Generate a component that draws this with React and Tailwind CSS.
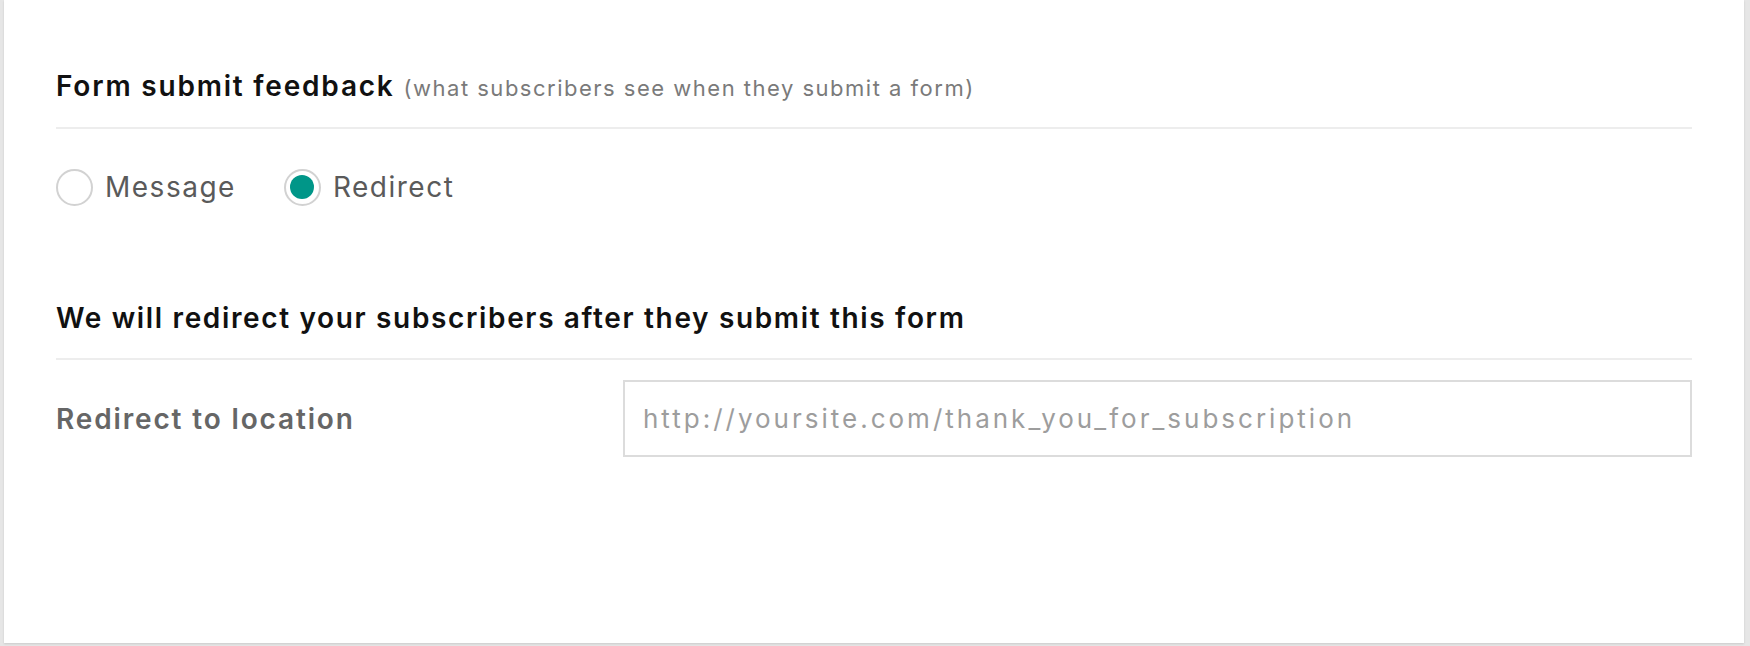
import { useState } from "react";

function Radio({ checked, label, onClick }) {
  return (
    <button type="button" onClick={onClick} className="flex items-center gap-[12px]">
      <span className="flex h-[37px] w-[37px] items-center justify-center rounded-full border-2 border-[#d2d2d2] bg-white">
        {checked && <span className="h-[24px] w-[24px] rounded-full bg-[#009688]" />}
      </span>
      <span className="text-[28px] leading-[38px] tracking-[1.5px] text-[#5a5a5a]">{label}</span>
    </button>
  );
}

export default function App() {
  const [mode, setMode] = useState("redirect");

  return (
    <div className="h-[646px] bg-[#e6e6e6] pl-[4px] pr-[6px] pb-[3px] font-['Inter',sans-serif]">
      <div className="h-full bg-white px-[52px] pt-[70px] shadow-[0_1px_2px_rgba(0,0,0,0.12)]">
        <h2 className="border-b-2 border-[#ededed] pb-[23px] text-[28px] leading-[32px] font-semibold tracking-[1.8px] text-[#111]">
          Form submit feedback{" "}
          <span className="text-[22px] font-normal tracking-[1.5px] text-[#7a7a7a]">(what subscribers see when they submit a form)</span>
        </h2>

        <div className="mt-[39px] flex items-center gap-[48px]">
          <Radio checked={mode === "message"} label="Message" onClick={() => setMode("message")} />
          <Radio checked={mode === "redirect"} label="Redirect" onClick={() => setMode("redirect")} />
        </div>

        <h2 className="mt-[96px] border-b-2 border-[#ededed] pb-[24px] text-[28px] leading-[32px] font-semibold tracking-[1.65px] text-[#111]">
          We will redirect your subscribers after they submit this form
        </h2>

        <div className="mt-[20px] flex items-center">
          <label className="w-[567px] text-[28px] font-semibold tracking-[1.85px] text-[#666]">Redirect to location</label>
          <input
            type="text"
            placeholder="http://yoursite.com/thank_you_for_subscription"
            className="h-[77px] flex-1 border-2 border-[#dcdcdc] px-[18px] text-[26px] tracking-[3px] text-[#333] outline-none placeholder:text-[#9d9d9d]"
          />
        </div>
      </div>
    </div>
  );
}
